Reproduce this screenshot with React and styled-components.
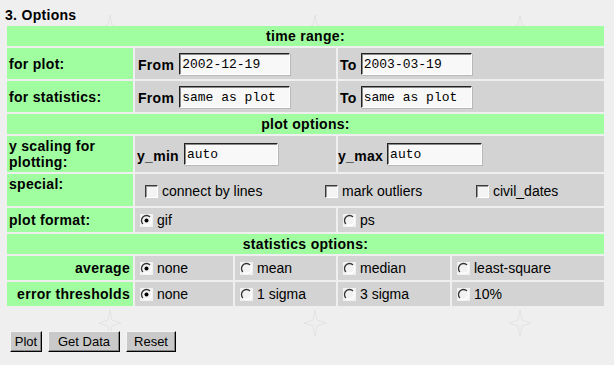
import React from 'react';
import styled, { createGlobalStyle } from 'styled-components';

const starTile = encodeURIComponent(
  `<svg xmlns="http://www.w3.org/2000/svg" width="205" height="295"><path d="M110 15 L112 25 L121 28 L112 31 L110 41 L108 31 L99 28 L108 25 Z" fill="none" stroke="#e3e3e3" stroke-width="1"/></svg>`
);

const GlobalStyle = createGlobalStyle`
  html, body {
    margin: 0;
    background: #efefef url("data:image/svg+xml,${starTile}") 0 0 repeat;
    font-family: "Liberation Sans", Arial, sans-serif;
    font-size: 14px;
    color: #000;
  }
`;

const Page = styled.div`
  padding: 8px 0 0 5px;
  width: 600px;
`;

const Title = styled.h3`
  margin: 0 0 1px;
  font-size: 14px;
  line-height: 15px;
  font-weight: bold;
  letter-spacing: 0.3px;
`;

const Table = styled.div`
  display: grid;
  grid-template-columns: 126px 98px 101px 112px 152px;
  grid-template-rows: 20px 31px 31px 20px 36px 32px 24px 20px 24px 24px;
  gap: 2px;
  padding: 2px;
`;

const Header = styled.div`
  grid-column: 1 / -1;
  background: #a0fea0;
  font-weight: bold;
  letter-spacing: 0.3px;
  display: flex;
  align-items: center;
  justify-content: center;
`;

const Label = styled.div`
  background: #a0fea0;
  font-weight: bold;
  letter-spacing: 0.3px;
  line-height: 16px;
  display: flex;
  align-items: ${({ $top }) => ($top ? 'flex-start' : 'center')};
  justify-content: ${({ $right }) => ($right ? 'flex-end' : 'flex-start')};
  padding: ${({ $top }) => ($top ? '2px 3px 0 2px' : '0 3px 0 2px')};
`;

const Cell = styled.div`
  grid-column: ${({ $span }) => $span || 'auto'};
  background: #d3d3d3;
  display: flex;
  align-items: center;
  gap: ${({ $gap }) => $gap || 4}px;
  padding-left: ${({ $pad }) => ($pad === undefined ? 5 : $pad)}px;
`;

const FieldName = styled.span`
  font-weight: bold;
  letter-spacing: 0.3px;
  padding-top: 3px;
`;

const TextBox = styled.input`
  box-sizing: border-box;
  width: ${({ $w }) => $w}px;
  height: 22px;
  margin: 0;
  padding: 1px 2px 0;
  font-family: "Liberation Mono", "Courier New", monospace;
  font-size: 13px;
  color: #000;
  background: #f8f8f8;
  border: 1px solid;
  border-color: #222 #fff #fff #222;
  box-shadow: inset 1px 1px 0 #8a8a8a, 1px 1px 0 #b8b8b8;
  outline: none;
`;

const Checks = styled.div`
  grid-column: 2 / -1;
  background: #d3d3d3;
  display: grid;
  grid-template-columns: 180px 151px auto;
  align-items: center;
  padding-left: 10px;
  padding-top: 2px;
`;

const Option = styled.span`
  display: inline-flex;
  align-items: center;
  gap: 4px;
`;

const Box = styled.span`
  box-sizing: border-box;
  width: 13px;
  height: 13px;
  background: #f4f4f4;
  border: 1px solid;
  border-color: #3a3a3a #fff #fff #3a3a3a;
  box-shadow: inset 1px 1px 0 #9a9a9a;
`;

const Radio = ({ checked }) => (
  <svg width="13" height="13" viewBox="0 0 13 13">
    <rect width="13" height="13" fill="#f2f2f2" />
    <path d="M2.96 10.04 A5 5 0 0 1 10.04 2.96" fill="none" stroke="#333" strokeWidth="1.3" />
    <path d="M10.04 2.96 A5 5 0 0 1 2.96 10.04" fill="none" stroke="#fff" strokeWidth="1.3" />
    {checked && <circle cx="6.5" cy="6.5" r="2" fill="#000" />}
  </svg>
);

const Choice = ({ checked, children }) => (
  <Option>
    <Radio checked={checked} />
    {children}
  </Option>
);

const Check = ({ children }) => (
  <Option>
    <Box />
    {children}
  </Option>
);

const Buttons = styled.div`
  display: flex;
  gap: 6px;
  margin: 23px 0 0 5px;
`;

const Button = styled.button`
  box-sizing: border-box;
  width: ${({ $w }) => $w}px;
  height: 21px;
  margin: 0;
  padding: 0;
  font-family: "Liberation Sans", Arial, sans-serif;
  font-size: 13px;
  color: #000;
  background: #c9c9c9;
  border: 1px solid;
  border-color: #f4f4f4 #000 #000 #f4f4f4;
  box-shadow: inset -1px -1px 0 #858585;
`;

const stats = [
  { label: 'average', items: ['none', 'mean', 'median', 'least-square'] },
  { label: 'error thresholds', items: ['none', '1 sigma', '3 sigma', '10%'] },
];

export default function App() {
  return (
    <>
      <GlobalStyle />
      <Page>
        <Title>3. Options</Title>
        <Table>
          <Header>time range:</Header>
          <Label>for plot:</Label>
          <Cell $span="2 / 4" $pad={3} $gap={5}>
            <FieldName>From</FieldName>
            <TextBox $w={111} defaultValue="2002-12-19" />
          </Cell>
          <Cell $span="4 / 6" $pad={2} $gap={4}>
            <FieldName>To</FieldName>
            <TextBox $w={111} defaultValue="2003-03-19" />
          </Cell>
          <Label>for statistics:</Label>
          <Cell $span="2 / 4" $pad={3} $gap={5}>
            <FieldName>From</FieldName>
            <TextBox $w={111} defaultValue="same as plot" />
          </Cell>
          <Cell $span="4 / 6" $pad={2} $gap={4}>
            <FieldName>To</FieldName>
            <TextBox $w={111} defaultValue="same as plot" />
          </Cell>

          <Header>plot options:</Header>
          <Label>y scaling for plotting:</Label>
          <Cell $span="2 / 4" $pad={2} $gap={5}>
            <FieldName>y_min</FieldName>
            <TextBox $w={94} defaultValue="auto" />
          </Cell>
          <Cell $span="4 / 6" $pad={0} $gap={4}>
            <FieldName>y_max</FieldName>
            <TextBox $w={95} defaultValue="auto" />
          </Cell>
          <Label $top>special:</Label>
          <Checks>
            <Check>connect by lines</Check>
            <Check>mark outliers</Check>
            <Check>civil_dates</Check>
          </Checks>
          <Label>plot format:</Label>
          <Cell $span="2 / 4">
            <Choice checked>gif</Choice>
          </Cell>
          <Cell $span="4 / 6">
            <Choice>ps</Choice>
          </Cell>

          <Header>statistics options:</Header>
          {stats.map((row) => (
            <React.Fragment key={row.label}>
              <Label $right>{row.label}</Label>
              {row.items.map((item, i) => (
                <Cell key={item}>
                  <Choice checked={i === 0}>{item}</Choice>
                </Cell>
              ))}
            </React.Fragment>
          ))}
        </Table>
        <Buttons>
          <Button $w={32}>Plot</Button>
          <Button $w={72}>Get Data</Button>
          <Button $w={50}>Reset</Button>
        </Buttons>
      </Page>
    </>
  );
}
